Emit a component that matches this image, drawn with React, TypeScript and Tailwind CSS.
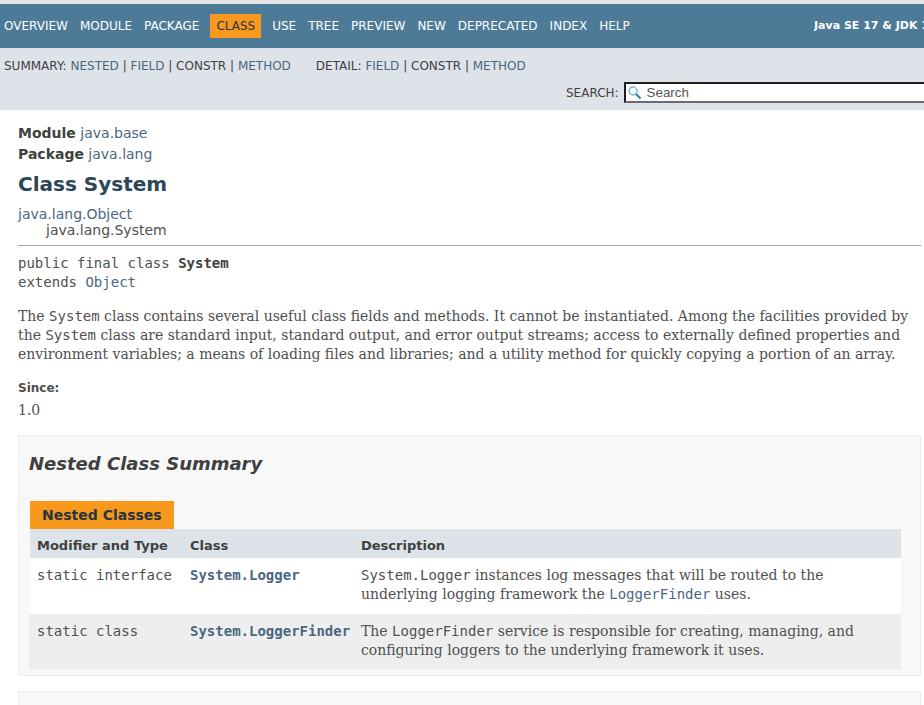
import React from "react";

const sans = "font-['DejaVu_Sans',sans-serif]";

function Code({ children, className = "" }: { children: React.ReactNode; className?: string }) {
  return <span className={`font-['DejaVu_Mono',monospace] ${className}`}>{children}</span>;
}

function A({ children, className = "" }: { children: React.ReactNode; className?: string }) {
  return <a className={`text-[#4A6782] ${className}`}>{children}</a>;
}

const navItems = ["OVERVIEW", "MODULE", "PACKAGE", "CLASS", "USE", "TREE", "PREVIEW", "NEW", "DEPRECATED", "INDEX", "HELP"];

export default function App() {
  return (
    <div className={`${sans} w-[924px] h-[705px] overflow-hidden bg-white text-[14px] text-[#505050]`}>
      <div className="h-[4px] bg-[#e3e3e3]" />
      <div className="h-[44px] bg-[#4D7A97] flex items-center text-[12px] text-white whitespace-nowrap relative">
        <ul className="flex items-center pl-[4px]">
          {navItems.map((n) =>
            n === "CLASS" ? (
              <li key={n} className="bg-[#F8981D] text-[#253441] px-[6px] py-[3px] ml-[-1px] mr-[11px]">{n}</li>
            ) : (
              <li key={n} className="mr-[12px]">{n}</li>
            )
          )}
        </ul>
        <div className="absolute left-[814px] top-[14px] text-[11px] font-bold w-[110px] overflow-hidden">Java SE 17 &amp; JDK 17</div>
      </div>
      <div className="h-[62px] bg-[#dee3e9] text-[12px] text-[#404040] relative">
        <div className="flex pl-[4px] pt-[9px] whitespace-nowrap">
          <div>SUMMARY: <A>NESTED</A> | <A>FIELD</A> | CONSTR | <A>METHOD</A></div>
          <div className="ml-[25px]">DETAIL: <A>FIELD</A> | CONSTR | <A>METHOD</A></div>
        </div>
        <div className="absolute left-[566px] top-[34px] flex items-center whitespace-nowrap">
          <label>SEARCH:</label>
          <div className="ml-[5px] w-[320px] h-[21px] bg-white border-2 border-[#1d1d1d] border-b-[#6b6b6b] border-r-0 flex items-center font-['Liberation_Sans',sans-serif] text-[13.33px] text-[#555]">
            <svg width="15" height="15" viewBox="0 0 15 15" className="ml-[1px]" fill="none">
              <circle cx="6" cy="6" r="4" stroke="#7fb5d5" strokeWidth="1.5" fill="#f2f8fc" />
              <path d="M9 9 L13.5 13.5" stroke="#2f7fa8" strokeWidth="2" />
            </svg>
            <span className="ml-[5px]">Search</span>
          </div>
        </div>
      </div>

      <main className="px-[18px] pt-[13px]">
        <div className="leading-[21px] text-[14px]">
          <div><b className="text-[#404040]">Module</b> <A>java.base</A></div>
          <div><b className="text-[#404040]">Package</b> <A>java.lang</A></div>
        </div>
        <h1 className="text-[20px] font-bold text-[#2c4557] mt-[7px] leading-[24px]">Class System</h1>
        <div className="mt-[10px] leading-[16px]">
          <div><A>java.lang.Object</A></div>
          <div className="pl-[28px]">java.lang.System</div>
        </div>
        <hr className="mt-[7px] w-[903px] border-t border-[#a6a6a6] border-b-0" />
        <div className="mt-[8px] text-[14px] leading-[19px]">
          <div><Code>public final class <b className="text-[#404040]">System</b></Code></div>
          <div><Code>extends <A>Object</A></Code></div>
        </div>
        <div className="mt-[15px] w-[902px] font-['DejaVu_Serif',serif] leading-[19px]">
          The <Code>System</Code> class contains several useful class fields and methods. It cannot be instantiated. Among the facilities provided by the <Code>System</Code> class are standard input, standard output, and error output streams; access to externally defined properties and environment variables; a means of loading files and libraries; and a utility method for quickly copying a portion of an array.
        </div>
        <div className="mt-[16px] text-[12px] font-bold text-[#4E4E4E] leading-[16px]">Since:</div>
        <div className="mt-[5px] font-['DejaVu_Serif',serif] leading-[19px]">1.0</div>

        <section className="mt-[15px] w-[903px] h-[241px] bg-[#f8f8f8] border border-[#ededed] px-[10px]">
          <h2 className="italic font-bold text-[18px] leading-[22px] text-[#404040] mt-[17px]">Nested Class Summary</h2>
          <div className="mt-[26px] ml-[1px] w-[144px] h-[28px] bg-[#F8981D] text-[#253441] font-bold flex items-center pl-[12px]">Nested Classes</div>
          <div className="grid grid-cols-[153px_171px_548px] w-[872px] text-[14px]">
            <div className="contents font-bold text-[13px] text-[#404040]">
              <div className="bg-[#dee3e9] h-[29px] ml-[1px] pl-[7px] pt-[4px] flex items-center">Modifier and Type</div>
              <div className="bg-[#dee3e9] h-[29px] pl-[8px] pt-[4px] flex items-center">Class</div>
              <div className="bg-[#dee3e9] h-[29px] pl-[8px] pt-[4px] flex items-center">Description</div>
            </div>
            <div className="bg-white h-[56px] ml-[1px] pl-[7px] pt-[8px] leading-[19px]"><Code>static interface</Code></div>
            <div className="bg-white h-[56px] pl-[8px] pt-[8px] leading-[19px]"><Code className="font-bold text-[#4A6782]">System.Logger</Code></div>
            <div className="bg-white h-[56px] pl-[8px] pt-[8px] leading-[19px] font-['DejaVu_Serif',serif]">
              <Code>System.Logger</Code> instances log messages that will be routed to the underlying logging framework the <Code className="text-[#4A6782]">LoggerFinder</Code> uses.
            </div>
            <div className="bg-[#eeeeef] h-[56px] pl-[8px] pt-[8px] leading-[19px]"><Code>static class</Code></div>
            <div className="bg-[#eeeeef] h-[56px] pl-[8px] pt-[8px] leading-[19px]"><Code className="font-bold text-[#4A6782]">System.LoggerFinder</Code></div>
            <div className="bg-[#eeeeef] h-[56px] pl-[8px] pt-[8px] leading-[19px] font-['DejaVu_Serif',serif]">
              The <Code>LoggerFinder</Code> service is responsible for creating, managing, and configuring loggers to the underlying framework it uses.
            </div>
          </div>
        </section>
        <section className="mt-[15px] w-[903px] h-[40px] bg-[#f8f8f8] border border-[#ededed]" />
      </main>
    </div>
  );
}
